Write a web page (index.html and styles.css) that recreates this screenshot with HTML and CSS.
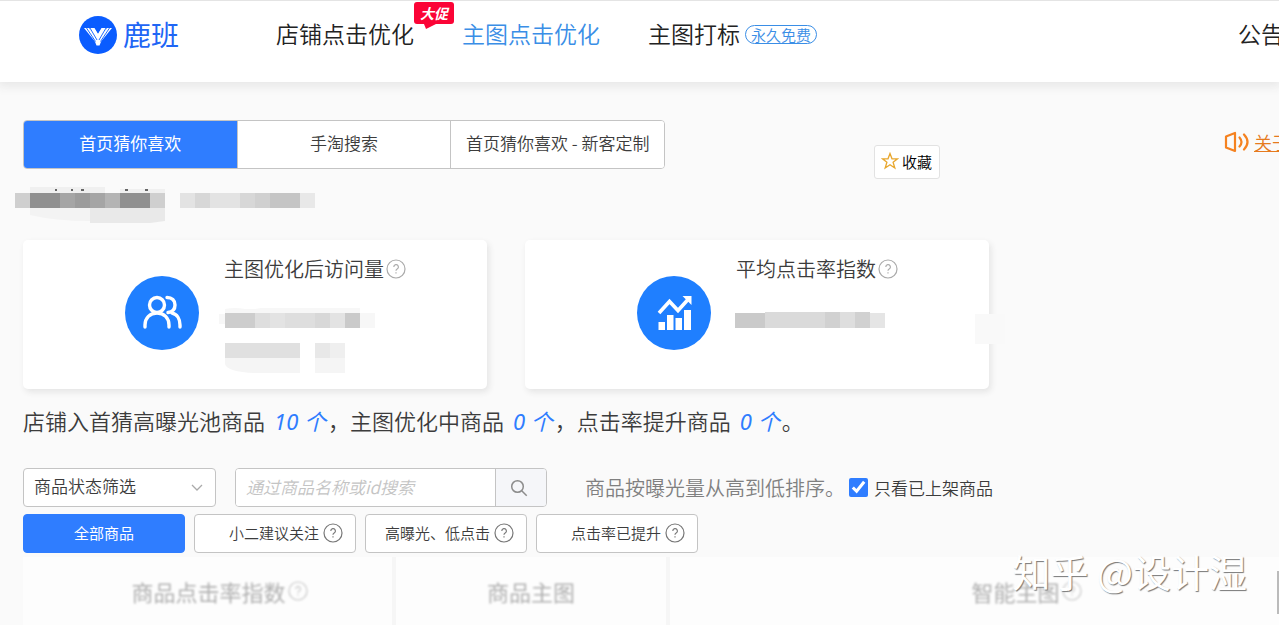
FILE: index.html
```html
<!DOCTYPE html>
<html lang="zh-CN">
<head>
<meta charset="utf-8">
<title>鹿班</title>
<link rel="stylesheet" href="styles.css">
</head>
<body>
<svg class="defs" width="0" height="0" aria-hidden="true">
  <symbol id="help" viewBox="0 0 20 20">
    <circle cx="10" cy="10" r="9" fill="none" stroke="currentColor" stroke-width="1.2"/>
    <path d="M7.800 8a2.300 2.300 0 1 1 3.400 2c-.8.500-1.200.9-1.200 1.800M10 13.300v1.300" fill="none" stroke="currentColor" stroke-width="1.200"/>
  </symbol>
</svg>

<header class="header">
  <a class="logo" href="#">
    <svg class="logo-mark" viewBox="0 0 38 38" aria-hidden="true">
      <circle cx="19" cy="19" r="19" fill="#0a5cff"/>
      <path d="M5 12h5l5 7 1 6.500z" fill="#fff"/>
      <path d="M33 12h-5l-5 7-1 6.500z" fill="#fff"/>
      <path d="M10.500 12h5l3.500 5.500 3.500-5.500h5L20.500 29.500h-3z" fill="#fff"/>
      <path d="M7.500 12l9 13.500M30.500 12l-9 13.500M11 12l7 12M27 12l-7 12" fill="none" stroke="#0a5cff" stroke-width=".9"/>
      <path d="M15.500 11h7L19 17.500z" fill="#0a5cff"/>
    </svg>
    <span class="logo-name">鹿班</span>
  </a>
  <nav class="nav">
    <a class="nav-link" href="#">店铺点击优化
      <span class="promo">大促<svg class="promo-tail" viewBox="0 0 12 5" aria-hidden="true"><path d="M0 0h12L2 5z" fill="#fb0436"/></svg></span>
    </a>
    <a class="nav-link active" href="#">主图点击优化</a>
    <a class="nav-link" href="#">主图打标<span class="free">永久免费</span></a>
  </nav>
  <a class="notice" href="#">公告</a>
</header>

<main class="page">
  <div class="topbar">
    <div class="tabs">
      <button class="tab selected" type="button">首页猜你喜欢</button>
      <button class="tab" type="button">手淘搜索</button>
      <button class="tab" type="button">首页猜你喜欢 - 新客定制</button>
    </div>
    <a class="about" href="#">
      <svg class="speaker" viewBox="0 0 26 22" aria-hidden="true"><g fill="none" stroke="#f58220" stroke-width="2.200" stroke-linecap="round" stroke-linejoin="round"><path d="M2 5.500l9-3.500v18l-9-3.500z"/><path d="M15.500 6.500q4 4.500 0 9M20 3.500q7 7.500 0 15"/></g></svg>
      <span class="about-text">关于</span>
    </a>
    <button class="favorite" type="button">
      <svg class="star" viewBox="0 0 18 18" aria-hidden="true"><path d="M9 1.500l2 5.300h5.500l-4.400 3.500 1.700 5.700L9 12.700 4.200 16l1.700-5.700L1.500 6.800H7z" fill="none" stroke="#e8a72e" stroke-width="1.300"/></svg>收藏
    </button>
  </div>

  <svg class="hidden-name" viewBox="0 0 300 36" aria-hidden="true">
    <path d="M15 0h75v6H15zM105 2h45v4h-45z" fill="#f0f0f0"/>
    <path d="M40 2h2v2h-2zM56 2h2v2h-2zM66 2h3v2h-3zM110 2h3v2h-3zM130 2h3v2h-3z" fill="#666"/>
    <path d="M0 6h15v15H0zM135 6h15v15h-15z" fill="#cfcfcf"/>
    <path d="M15 6h30v15H15zM105 6h30v15h-30z" fill="#909090"/>
    <path d="M45 6h15v15H45zM75 6h15v15H75z" fill="#a5a5a5"/>
    <path d="M60 6h15v15H60z" fill="#9c9c9c"/><path d="M90 6h15v15H90z" fill="#b4b4b4"/>
    <path d="M15 21h60v13q-35 0-60-6z" fill="#f3f3f3"/><path d="M75 21h75v13l-15 2H75z" fill="#e9e9e9"/>
    <path d="M165 6h15v15h-15zM195 6h30v15h-30z" fill="#e3e3e3"/><path d="M180 6h15v15h-15zM225 6h15v15h-15z" fill="#d7d7d7"/>
    <path d="M240 6h15v15h-15z" fill="#d0d0d0"/><path d="M255 6h30v15h-30z" fill="#c5c5c5"/><path d="M285 6h15v15h-15z" fill="#e8e8e8"/>
  </svg>

  <section class="cards">
    <article class="card">
      <svg class="card-icon" viewBox="0 0 74 74" aria-hidden="true"><circle cx="37" cy="37" r="37" fill="#1f7fff"/>
        <g fill="none" stroke="#fff" stroke-width="3.400" stroke-linecap="round" stroke-linejoin="round"><circle cx="32" cy="29" r="7.500"/><path d="M20 51v-2c0-7 5-12 12-12s12 5 12 12v2M42 21.500c5 0 8 3 8 7.500s-3 7-7 7.500M47 37c5 1 8 6 8 12v2"/></g></svg>
      <div class="card-body">
        <h2 class="card-title">主图优化后访问量<svg class="help"><use href="#help"/></svg></h2>
        <svg class="mosaic" viewBox="0 0 156 66" width="156" height="66" aria-hidden="true">
          <path d="M6 1q10-2 20 0h10q10-2 20-2h85v6H6zM0 6h6v10H0zM141 5h15v15h-15z" fill="#f7f7f7"/>
          <path d="M6 5h30v15H6z" fill="#cdcdcd"/><path d="M36 5h15v15H36zM66 5h30v15H66z" fill="#dedede"/><path d="M51 5h15v15H51zM111 5h15v15h-15z" fill="#e3e3e3"/><path d="M96 5h15v15H96z" fill="#d8d8d8"/><path d="M126 5h15v15h-15z" fill="#cacaca"/>
          <path d="M6 35h75v15H6z" fill="#e0e0e0"/><path d="M96 35h15v15H96z" fill="#e8e8e8"/><path d="M111 35h15v15h-15z" fill="#efefef"/>
          <path d="M6 50h60v15H36Q8 64 6 56zM66 50h15v15H66zM96 50h30v15H96z" fill="#f5f5f5"/>
        </svg>
      </div>
    </article>
    <article class="card wide-inset">
      <svg class="card-icon" viewBox="0 0 74 74" aria-hidden="true"><circle cx="37" cy="37" r="37" fill="#1f7fff"/>
        <path d="M21.500 46h6.500v8h-6.500zM30 39h6.500v15H30zM38.500 42H45v12h-6.500zM47 34h7v20h-7z" fill="#fff"/><path d="M22 37l10.500-11.500 8.500 9 10-11" fill="none" stroke="#fff" stroke-width="3.600"/><path d="M45.500 20h9v9z" fill="#fff"/></svg>
      <div class="card-body">
        <h2 class="card-title">平均点击率指数<svg class="help"><use href="#help"/></svg></h2>
        <svg class="mosaic" viewBox="0 0 156 66" width="156" height="66" aria-hidden="true">
          <path d="M4 5h30v15H4z" fill="#cacaca"/><path d="M34 4h60v16H34z" fill="#dadada"/><path d="M94 4h15v16H94zM124 4h15v16h-15z" fill="#d1d1d1"/><path d="M109 4h15v16h-15z" fill="#dedede"/><path d="M139 5h15v15h-15z" fill="#e5e5e5"/>
        </svg>
      </div>
      <span class="smudge"></span>
    </article>
  </section>

  <p class="summary">店铺入首猜高曝光池商品<em>10 个</em>，主图优化中商品<em>0 个</em>，点击率提升商品<em>0 个</em>。</p>

  <form class="filters">
    <div class="select-wrap">
      <select class="select" aria-label="商品状态筛选"><option>商品状态筛选</option></select>
      <svg class="chevron" viewBox="0 0 12 8" aria-hidden="true"><path d="M1 1l5 5 5-5" fill="none" stroke="#aaa" stroke-width="1.300"/></svg>
    </div>
    <div class="search">
      <input class="search-input" type="text" placeholder="通过商品名称或id搜索" aria-label="通过商品名称或id搜索">
      <button class="search-button" type="button" aria-label="搜索"><svg viewBox="0 0 18 18" width="18" height="18"><g fill="none" stroke="#8c8c8c" stroke-width="1.500"><circle cx="7.500" cy="7.500" r="5.800"/><path d="M11.700 11.700l5 5"/></g></svg></button>
    </div>
    <span class="sort-note">商品按曝光量从高到低排序。</span>
    <label class="check"><input class="checkbox" type="checkbox" checked>只看已上架商品</label>
  </form>

  <div class="chips">
    <button class="chip on" type="button">全部商品</button>
    <button class="chip" type="button">小二建议关注<svg class="help"><use href="#help"/></svg></button>
    <button class="chip" type="button">高曝光、低点击<svg class="help"><use href="#help"/></svg></button>
    <button class="chip" type="button">点击率已提升<svg class="help"><use href="#help"/></svg></button>
  </div>

  <div class="table-wrap">
    <table class="products">
      <thead><tr>
        <th class="col-index" scope="col"><span class="th">商品点击率指数<svg class="help"><use href="#help"/></svg></span></th>
        <th class="col-image" scope="col"><span class="th">商品主图</span></th>
        <th class="col-smart" scope="col"><span class="th">智能主图<svg class="help"><use href="#help"/></svg></span></th>
      </tr></thead>
    </table>
  </div>
</main>

<div class="scroll-thumb"></div>
<div class="watermark">知乎 @设计湿</div>
</body>
</html>
```

FILE: styles.css
```css
* { box-sizing: border-box; }

body {
  position: relative;
  margin: 0;
  min-height: 100vh;
  overflow: hidden;
  background: #fafafa;
  color: #3c3c3c;
  font-family: "Noto Sans CJK SC", sans-serif;
  font-weight: 350;
}

a { color: inherit; text-decoration: none; }
button, input, select { font: inherit; color: inherit; }
svg { display: block; flex: none; }
.defs { position: absolute; }

.header {
  display: flex;
  align-items: flex-start;
  height: 82px;
  padding: 15px 0 0 79px;
  border-top: 1px solid #e4e4e4;
  background: #fff;
  box-shadow: 0 2px 10px 2px #e6e6e6;
  white-space: nowrap;
}
.logo { display: flex; align-items: center; gap: 6px; }
.logo-mark { width: 38px; height: 38px; }
.logo-name { padding-bottom: 2px; color: #1f66f5; font-size: 28px; line-height: 36px; font-weight: 400; }

.nav { display: flex; gap: 48px; margin-left: 97px; }
.nav-link {
  position: relative;
  display: flex;
  align-items: center;
  color: #222;
  font-size: 23px;
  line-height: 34px;
}
.nav-link.active { color: #3a8ee6; }
.promo {
  position: absolute;
  left: 138px;
  top: -14px;
  width: 40px;
  border-radius: 3px;
  background: #fb0436;
  color: #fff;
  font-size: 14px;
  line-height: 22px;
  font-weight: 700;
  font-style: italic;
  text-align: center;
}
.promo-tail { position: absolute; left: 10px; top: 22px; width: 12px; height: 5px; }
.free {
  margin: 3px 0 0 5px;
  padding: 0 5px;
  border: 1px solid #3a8ee6;
  border-radius: 10px;
  color: #3a8ee6;
  font-size: 15px;
  line-height: 17px;
}
.notice {
  width: 41px;
  margin-left: auto;
  overflow: hidden;
  color: #222;
  font-size: 23px;
  line-height: 34px;
}

.page { padding: 38px 0 0 23px; }

.topbar { position: relative; display: flex; justify-content: space-between; }
.tabs {
  display: flex;
  width: 642px;
  height: 49px;
  border: 1px solid #c4c4c4;
  border-radius: 4px;
  background: #fff;
  overflow: hidden;
}
.tab {
  flex: 1;
  padding: 0 0 4px;
  border: 0;
  border-left: 1px solid #c4c4c4;
  background: #fff;
  font-size: 17px;
  white-space: nowrap;
}
.tab:first-child { border-left: 0; }
.tab.selected { background: #2f7dff; color: #fff; font-weight: 400; }

.about {
  display: flex;
  align-items: center;
  gap: 4px;
  width: 55px;
  height: 44px;
  overflow: hidden;
  color: #e67a1e;
  font-size: 18px;
  white-space: nowrap;
}
.speaker { width: 26px; height: 22px; }
.about-text { text-decoration: underline; }

.favorite {
  position: absolute;
  left: 851px;
  top: 25px;
  display: flex;
  align-items: center;
  gap: 3px;
  width: 66px;
  height: 34px;
  padding: 0 6px 2px;
  border: 1px solid #e2e2e2;
  border-radius: 3px;
  background: #fff;
  color: #000;
  font-size: 15px;
  white-space: nowrap;
}
.star { width: 18px; height: 18px; }

.hidden-name { width: 300px; height: 36px; margin: 18px 0 17px -8px; }

.cards { display: flex; gap: 38px; }
.card {
  position: relative;
  display: flex;
  gap: 20px;
  width: 464px;
  padding: 14px 0 15px 102px;
  border-radius: 5px;
  background: #fff;
  box-shadow: 2px 3px 6px #e4e4e4;
}
.wide-inset { padding-left: 112px; }
.card-icon { width: 74px; height: 74px; margin-top: 22px; }
.card-title {
  display: flex;
  align-items: center;
  gap: 2px;
  margin: 0 0 24px 5px;
  font-size: 20px;
  line-height: 30px;
  font-weight: 350;
}
.card-title .help { color: #aaa; }
.help { width: 20px; height: 20px; }
.smudge { position: absolute; left: 450px; top: 74px; width: 30px; height: 30px; background: #f9f9f9; }

.summary { margin: 15px 0 0; font-size: 22px; line-height: 32px; white-space: nowrap; }
.summary em {
  margin: 0 2px 0 9px;
  color: #2f7dff;
  font-family: "Noto Sans", "Noto Sans CJK SC", sans-serif;
  font-weight: 400;
}

.filters { display: flex; align-items: center; margin-top: 31px; white-space: nowrap; }
.select-wrap { position: relative; width: 193px; margin-right: 19px; }
.select {
  width: 100%;
  height: 39px;
  padding: 0 10px 4px;
  border: 1px solid #c4c4c4;
  border-radius: 4px;
  background: #fff;
  appearance: none;
  font-size: 17px;
}
.chevron { position: absolute; right: 13px; top: 16px; width: 12px; height: 8px; }
.search {
  display: flex;
  width: 312px;
  height: 39px;
  border: 1px solid #c4c4c4;
  border-radius: 4px;
  background: #fff;
  overflow: hidden;
}
.search-input { flex: 1; min-width: 0; padding: 0 10px 2px; border: 0; background: #fff; font-size: 17px; }
.search-input::placeholder { color: #c4c4c4; font-style: italic; }
.search-button {
  width: 51px;
  padding: 0 14px;
  border: 0;
  border-left: 1px solid #c4c4c4;
  background: #f5f6f9;
}
.sort-note { margin-left: 38px; color: #808080; font-size: 20px; line-height: 30px; }
.check { display: flex; align-items: center; gap: 6px; margin-left: 4px; font-size: 17px; line-height: 24px; }
.checkbox { width: 19px; height: 19px; margin: 0; accent-color: #2f7dff; }

.chips { display: flex; gap: 9px; margin-top: 7px; }
.chip {
  display: flex;
  align-items: center;
  justify-content: flex-end;
  gap: 4px;
  width: 162px;
  height: 39px;
  padding: 0 12px 2px 0;
  border: 1px solid #c4c4c4;
  border-radius: 4px;
  background: #fff;
  font-size: 15px;
  white-space: nowrap;
}
.chip .help { color: #777; }
.chip.on {
  justify-content: center;
  padding: 0 0 2px;
  border-color: #2f7dff;
  background: #2f7dff;
  color: #fff;
  font-weight: 400;
}

.table-wrap { margin-top: 4px; overflow: hidden; }
.products {
  width: 1360px;
  border-collapse: collapse;
  table-layout: fixed;
  background: #fdfdfd;
}
.products th { height: 72px; padding: 0 0 4px; border-left: 4px solid #f6f6f6; }
.products th:first-child { padding-left: 24px; border-left: 0; }
.col-index { width: 371px; }
.col-image { width: 274px; }
.th {
  display: flex;
  align-items: center;
  justify-content: center;
  gap: 2px;
  color: #b0b0b0;
  font-size: 22px;
  line-height: 32px;
  font-weight: 400;
  filter: blur(1px);
}
.th .help { color: #c8c8c8; }

.scroll-thumb { position: absolute; right: 0; top: 571px; width: 2px; height: 43px; background: #bbb; }
.watermark {
  position: absolute;
  right: 32px;
  top: 545px;
  color: #fff;
  font-size: 38px;
  line-height: 52px;
  font-weight: 400;
  text-shadow: 1px 1px 1px #777;
  white-space: nowrap;
}
```
